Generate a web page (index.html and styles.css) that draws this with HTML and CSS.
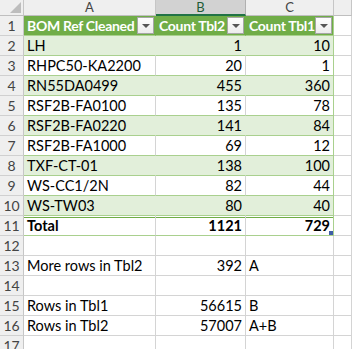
FILE: index.html
```html
<!DOCTYPE html>
<html>
<head>
<meta charset="utf-8">
<link rel="stylesheet" href="styles.css">
</head>
<body>
<div class="sheet">
  <div class="corner"><span class="tri"></span></div>
  <div class="ch">A</div>
  <div class="ch sel">B</div>
  <div class="ch">C</div>
  <div class="ch"></div>

  <div class="rh">1</div>
  <div class="c th"><span>BOM Ref Cleaned</span><span class="dd"></span></div>
  <div class="c th"><span>Count Tbl2</span><span class="dd"></span></div>
  <div class="c th last"><span>Count Tbl1</span><span class="dd"></span></div>
  <div class="c"></div>

  <div class="rh">2</div>
  <div class="c t band">LH</div>
  <div class="c t band num">1</div>
  <div class="c t band num last">10</div>
  <div class="c"></div>

  <div class="rh">3</div>
  <div class="c t">RHPC50-KA2200</div>
  <div class="c t num">20</div>
  <div class="c t num last">1</div>
  <div class="c"></div>

  <div class="rh">4</div>
  <div class="c t band">RN55DA0499</div>
  <div class="c t band num">455</div>
  <div class="c t band num last">360</div>
  <div class="c"></div>

  <div class="rh">5</div>
  <div class="c t">RSF2B-FA0100</div>
  <div class="c t num">135</div>
  <div class="c t num last">78</div>
  <div class="c"></div>

  <div class="rh">6</div>
  <div class="c t band">RSF2B-FA0220</div>
  <div class="c t band num">141</div>
  <div class="c t band num last">84</div>
  <div class="c"></div>

  <div class="rh">7</div>
  <div class="c t">RSF2B-FA1000</div>
  <div class="c t num">69</div>
  <div class="c t num last">12</div>
  <div class="c"></div>

  <div class="rh">8</div>
  <div class="c t band">TXF-CT-01</div>
  <div class="c t band num">138</div>
  <div class="c t band num last">100</div>
  <div class="c"></div>

  <div class="rh">9</div>
  <div class="c t">WS-CC1/2N</div>
  <div class="c t num">82</div>
  <div class="c t num last">44</div>
  <div class="c"></div>

  <div class="rh">10</div>
  <div class="c t band">WS-TW03</div>
  <div class="c t band num">80</div>
  <div class="c t band num last">40</div>
  <div class="c"></div>

  <div class="rh">11</div>
  <div class="c t tot">Total</div>
  <div class="c t tot num">1121</div>
  <div class="c t tot num last handle">729</div>
  <div class="c"></div>

  <div class="rh">12</div>
  <div class="c"></div><div class="c"></div><div class="c"></div><div class="c"></div>

  <div class="rh">13</div>
  <div class="c">More rows in Tbl2</div>
  <div class="c num">392</div>
  <div class="c">A</div>
  <div class="c"></div>

  <div class="rh">14</div>
  <div class="c"></div><div class="c"></div><div class="c"></div><div class="c"></div>

  <div class="rh">15</div>
  <div class="c">Rows in Tbl1</div>
  <div class="c num">56615</div>
  <div class="c">B</div>
  <div class="c"></div>

  <div class="rh">16</div>
  <div class="c">Rows in Tbl2</div>
  <div class="c num">57007</div>
  <div class="c">A+B</div>
  <div class="c"></div>

  <div class="rh">17</div>
  <div class="c"></div><div class="c"></div><div class="c"></div><div class="c"></div>
</div>
</body>
</html>
```

FILE: styles.css
```css
html, body {
  margin: 0;
  padding: 0;
  background: #ffffff;
  overflow: hidden;
}

.sheet {
  display: grid;
  grid-template-columns: 24px 132px 90px 88px 1fr;
  grid-template-rows: 16px;
  grid-auto-rows: 20px;
  font-family: "Lato", "Open Sans", "Liberation Sans", sans-serif;
  font-size: 14.5px;
  color: #000;
  width: 352px;
}

.sheet > div {
  box-sizing: border-box;
  border-right: 1px solid #d4d4d4;
  border-bottom: 1px solid #d4d4d4;
  white-space: nowrap;
  overflow: hidden;
  line-height: 20px;
}

.corner {
  background: #efefef;
  position: relative;
  border-right-color: #c6c6c6 !important;
  border-bottom-color: #bfbfbf !important;
}

.corner .tri {
  position: absolute;
  right: 2px;
  bottom: 2px;
  width: 0;
  height: 0;
  border-left: 11px solid transparent;
  border-bottom: 11px solid #bdbdbd;
}

.ch {
  background: #efefef;
  color: #444;
  text-align: center;
  font-size: 13px;
  line-height: 15px !important;
  border-right-color: #c6c6c6 !important;
  border-bottom-color: #bfbfbf !important;
}

.ch.sel {
  background: #d2d2d2;
  color: #1f5c36;
  border-bottom: 2px solid #217346 !important;
  border-right-color: #b0b0b0 !important;
  line-height: 14px !important;
}

.rh {
  background: #efefef;
  color: #444;
  text-align: center;
  font-size: 14px;
  border-right-color: #c6c6c6 !important;
  border-bottom-color: #d0d0d0 !important;
}

.c {
  padding: 0 3px;
}

.num {
  text-align: right;
}

.th {
  background: #70ad47;
  color: #ffffff;
  font-weight: bold;
  font-size: 14px;
  letter-spacing: -0.3px;
  display: flex;
  align-items: center;
  justify-content: space-between;
  padding: 0 1px 0 3px;
  border-right-color: #70ad47 !important;
  border-bottom-color: #a9d08e !important;
}

.th.last {
  border-right-color: #a9d08e !important;
}

.dd {
  flex: none;
  width: 17px;
  height: 17px;
  box-sizing: border-box;
  border: 1px solid #a6a6a6;
  background: linear-gradient(#fdfdfd, #ececec);
  position: relative;
}

.dd::after {
  content: "";
  position: absolute;
  left: 4px;
  top: 6px;
  border-left: 4px solid transparent;
  border-right: 4px solid transparent;
  border-top: 4px solid #555;
}

.t {
  border-bottom-color: #a9d08e !important;
}

.band {
  background: #e2efda;
  border-right-color: #e2efda !important;
}

.t.last {
  border-right-color: #a9d08e !important;
}

.tot {
  font-weight: bold;
  background: linear-gradient(to bottom, transparent 1px, #70ad47 1px, #70ad47 2px, transparent 2px);
}

.handle {
  position: relative;
}

.handle::after {
  content: "";
  position: absolute;
  right: 0;
  bottom: 0;
  width: 4px;
  height: 4px;
  background: #3f5ea8;
}
```
